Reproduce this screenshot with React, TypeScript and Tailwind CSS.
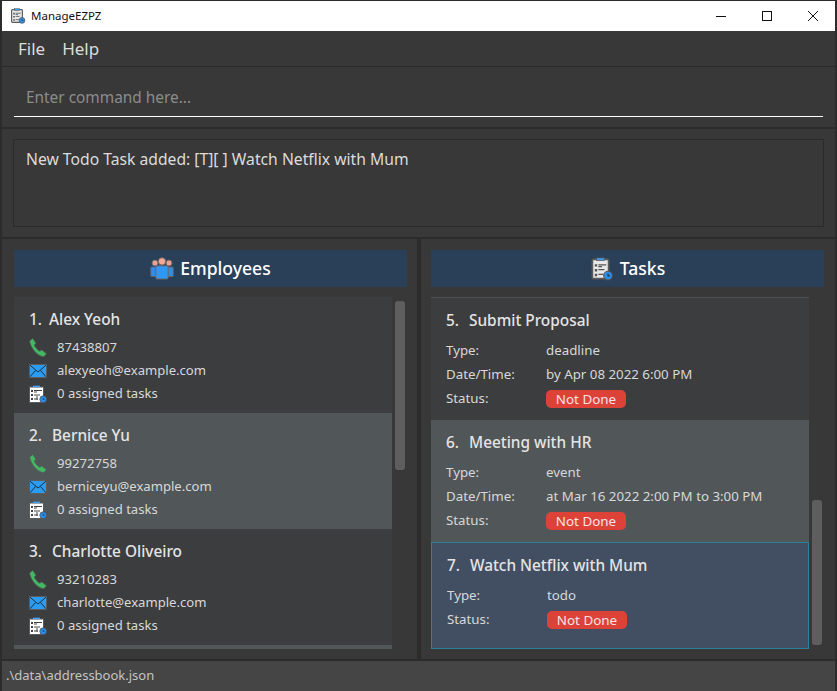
const font = { fontFamily: '"Noto Sans", "Open Sans", sans-serif' };

function AppIcon({ size = 20 }: { size?: number }) {
  return (
    <svg width={size} height={size} viewBox="0 0 20 20" aria-hidden>
      <rect x="2" y="2" width="13.5" height="16" rx="1" fill="#e8e8e8" stroke="#5a5a5a" strokeWidth="1.4" />
      <rect x="5.5" y="0.8" width="6.5" height="2.2" fill="#3b9df0" stroke="#5a5a5a" strokeWidth="0.6" />
      <path d="M4 6h2v2H4zM4 10h2v2H4zM4 14h2v2H4z" fill="#555" />
      <path d="M7 6.5h6.5M7 8h3M7 10.5h5M7 14.5h4" stroke="#555" strokeWidth="1" />
      <circle cx="15" cy="15.5" r="3.6" fill="#2f8fe8" stroke="#555" strokeWidth="0.9" />
      <path d="M15 13.5v2.2h1.6" stroke="#12395f" strokeWidth="0.9" fill="none" />
    </svg>
  );
}

function SmallTaskIcon() {
  return (
    <svg width="18" height="18" viewBox="0 0 18 18" aria-hidden>
      <rect x="0.5" y="2" width="14" height="15.5" fill="#fff" stroke="#5a5a5a" />
      <rect x="4" y="0.6" width="7" height="1.6" fill="#3b9df0" />
      <path d="M2 5h2v2H2zM2 9h2v2H2zM2 13h2v2H2z" fill="#444" />
      <path d="M5 5.5h8M5 7h3M5 10h6M5 14h4M8 11v4" stroke="#444" strokeWidth="1" />
      <circle cx="14.2" cy="14.2" r="3.4" fill="#2f8fe8" stroke="#4a4a4a" strokeWidth="0.7" />
      <path d="M14.2 12.6v1.8h1.3" stroke="#12395f" strokeWidth="0.8" fill="none" />
    </svg>
  );
}

function PhoneIcon() {
  return (
    <svg width="18" height="19" viewBox="0.4 0.4 16.2 17.6" aria-hidden>
      <path
        d="M1.2 2.8 3.6.9l3 4.3-1.5 1.7c.9 2.4 2.7 4.4 5.1 5.8l1.8-1.2 4.4 3.4-2.1 2.4c-.7.5-1.5.5-2.3.1C7 15.6 2.9 10.6 1 4.7c-.2-.7-.2-1.3.2-1.9Z"
        fill="#3fba63"
        stroke="#5c5c5c"
        strokeWidth="0.8"
      />
    </svg>
  );
}

function MailIcon() {
  return (
    <svg width="18" height="14" viewBox="0 0 18 14" aria-hidden>
      <rect x="0.5" y="0.5" width="17" height="13" fill="#2b9cf0" stroke="#5c5c5c" />
      <path d="M1 1.2 9 8l8-6.8M1 12.8l5.6-6.4M17 12.8l-5.6-6.4" stroke="#16304a" strokeWidth="1" fill="none" />
    </svg>
  );
}

function PeopleIcon() {
  return (
    <svg width="24" height="23" viewBox="0 0 24 23" aria-hidden>
      <circle cx="5" cy="6" r="3" fill="#f0a292" stroke="#666" />
      <circle cx="19" cy="6" r="3" fill="#f0a292" stroke="#666" />
      <rect x="0.8" y="10" width="6" height="9.5" rx="1" fill="#2f8fe8" stroke="#666" />
      <rect x="17.2" y="10" width="6" height="9.5" rx="1" fill="#2f8fe8" stroke="#666" />
      <circle cx="12" cy="4.4" r="3.7" fill="#f4a998" stroke="#666" />
      <rect x="5.8" y="8.8" width="12.4" height="13.2" rx="1.4" fill="#2f98f5" stroke="#666" />
    </svg>
  );
}

function PersonCard({ no, name, phone, email, tint, noWidth }: { no: number; name: string; phone: string; email: string; tint?: boolean; noWidth: string }) {
  return (
    <div className={`h-[116px] pl-[15px] pt-[11px] ${tint ? "bg-[#515658]" : "bg-[#3c3d3f]"}`}>
      <div className="flex h-[24px] items-center text-[15.4px] font-medium text-[#e4e4e4]">
        <span className={noWidth}>{no}.</span>
        <span>{name}</span>
      </div>
      <div className="mt-[4px] flex flex-col text-[13.1px] text-[#d8d8d8]">
        <div className="flex h-[23px] items-center"><span className="flex w-[28px]"><PhoneIcon /></span>{phone}</div>
        <div className="flex h-[23px] items-center"><span className="flex w-[28px]"><MailIcon /></span>{email}</div>
        <div className="flex h-[23px] items-center"><span className="flex w-[28px]"><SmallTaskIcon /></span>0 assigned tasks</div>
      </div>
    </div>
  );
}

function NotDone() {
  return (
    <span className="flex h-[18px] w-[80px] items-center justify-center rounded-[5px] bg-[#dc4238] text-[13.4px] text-[#f4e4e4]">
      Not Done
    </span>
  );
}

function TaskRow({ label, children }: { label: string; children: React.ReactNode }) {
  return (
    <div className="flex h-[24px] items-center text-[13.3px] text-[#d8d8d8]">
      <span className="w-[100px]">{label}</span>
      {children}
    </div>
  );
}

function TaskCard({ no, title, type, when, className }: { no: number; title: string; type: string; when?: string; className: string }) {
  return (
    <div className={`pl-[15px] pt-[11px] ${className}`}>
      <div className="flex h-[24px] items-center text-[15.4px] font-medium text-[#e4e4e4]">
        <span className="w-[23px]">{no}.</span>
        <span>{title}</span>
      </div>
      <div className="mt-[6px] flex flex-col">
        <TaskRow label="Type:">{type}</TaskRow>
        {when && <TaskRow label="Date/Time:">{when}</TaskRow>}
        <TaskRow label="Status:"><NotDone /></TaskRow>
      </div>
    </div>
  );
}

function PanelHeader({ icon, title }: { icon: React.ReactNode; title: string }) {
  return (
    <div className="flex h-[37px] items-center justify-center gap-[6px] bg-[#2a4059] text-[17.6px] font-medium text-white">
      {icon}
      <span>{title}</span>
    </div>
  );
}

export default function App() {
  return (
    <div className="flex h-[691px] w-[837px] flex-col overflow-hidden border-x-2 border-[#2c2c2c] bg-[#383838]" style={font}>
      <div className="flex h-[31px] shrink-0 items-center border-t border-[#2c2c2c] bg-white text-[11.5px] text-[#111]">
        <span className="ml-[8px] mr-[5px] flex"><AppIcon size={16} /></span>
        <span>ManageEZPZ</span>
        <div className="ml-auto flex items-center">
          <svg width="12" height="12" viewBox="0 0 12 12" className="mr-[34px]" aria-hidden><path d="M1 6.5h10" stroke="#111" /></svg>
          <svg width="12" height="12" viewBox="0 0 12 12" className="mr-[34px]" aria-hidden><rect x="1.5" y="1.5" width="9" height="9" fill="none" stroke="#111" /></svg>
          <svg width="12" height="12" viewBox="0 0 12 12" className="mr-[16px]" aria-hidden><path d="M1 1l10 10M11 1 1 11" stroke="#111" /></svg>
        </div>
      </div>

      <div className="flex h-[36px] shrink-0 items-center gap-[17px] border-b border-[#2a2a2a] pl-[16px] text-[17px] text-[#dcdcdc]">
        <span>File</span>
        <span>Help</span>
      </div>

      <div className="h-[62px] shrink-0 border-b-2 border-[#2c2c2c] px-[12px] pt-[17px]">
        <div className="flex h-[33px] items-start border-b border-white pl-[12px] pt-px text-[15.4px] leading-[26px] text-[#8c8c8c]">
          Enter command here...
        </div>
      </div>

      <div className="h-[110px] shrink-0 border-b-2 border-[#2c2c2c] px-[11px] pt-[10px]">
        <div className="h-[88px] border border-[#2b2b2b] pl-[12px] pt-[6px] text-[15.7px] leading-[26px] text-[#dcdcdc]">
          New Todo Task added: [T][ ] Watch Netflix with Mum
        </div>
      </div>

      <div className="flex min-h-0 flex-1">
        <div className="relative flex flex-1 flex-col border-r-2 border-[#2c2c2c] pl-[12px] pr-[10px] pt-[11px]">
          <PanelHeader icon={<PeopleIcon />} title="Employees" />
          <div className="mt-[10px] mr-[15px] h-[352px] overflow-hidden bg-[#515658]">
            <PersonCard no={1} name="Alex Yeoh" phone="87438807" email="alexyeoh@example.com" noWidth="w-[20px]" />
            <PersonCard no={2} name="Bernice Yu" phone="99272758" email="berniceyu@example.com" tint noWidth="w-[23px]" />
            <PersonCard no={3} name="Charlotte Oliveiro" phone="93210283" email="charlotte@example.com" noWidth="w-[23px]" />
          </div>
          <div className="absolute left-[393px] top-[62px] h-[169px] w-[10px] rounded-[3px] bg-[#5e5e5e]" />
        </div>

        <div className="relative flex flex-1 flex-col border-l-2 border-[#2c2c2c] pl-[10px] pr-[11px] pt-[11px]">
          <PanelHeader icon={<AppIcon size={24} />} title="Tasks" />
          <div className="mt-[10px] mr-[15px] h-[352px] overflow-hidden">
            <TaskCard no={5} title="Submit Proposal" type="deadline" when="by Apr 08 2022 6:00 PM" className="h-[123px] border-t border-[#505050] bg-[#3c3d3f]" />
            <TaskCard no={6} title="Meeting with HR" type="event" when="at Mar 16 2022 2:00 PM to 3:00 PM" className="h-[122px] bg-[#515658]" />
            <TaskCard no={7} title="Watch Netflix with Mum" type="todo" className="h-[107px] border border-[#2f8199] bg-[#424f62]" />
          </div>
          <div className="absolute left-[391px] top-[261px] h-[145px] w-[10px] rounded-[3px] bg-[#5e5e5e]" />
        </div>
      </div>

      <div className="flex h-[32px] shrink-0 items-center border-t-2 border-[#2c2c2c] bg-[#454545] pl-[4px] text-[13px] text-[#c4c4c4]">
        .\data\addressbook.json
      </div>
    </div>
  );
}
